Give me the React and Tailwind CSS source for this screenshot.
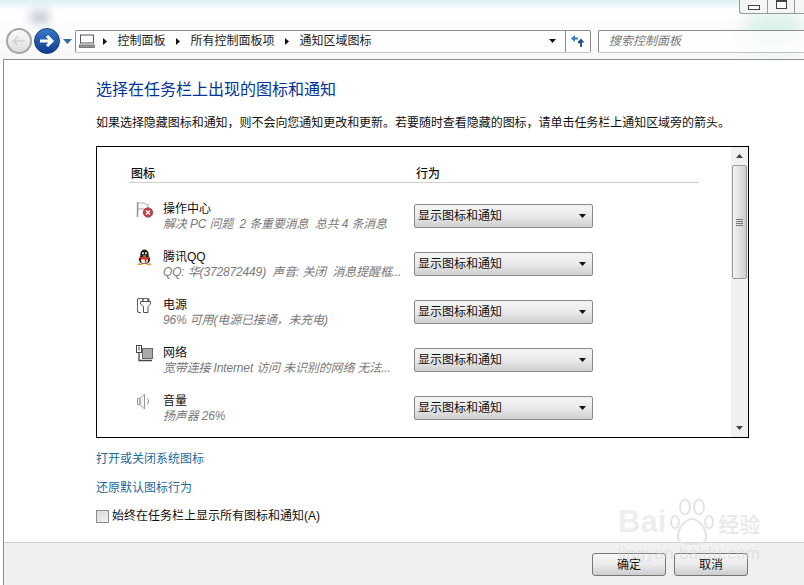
const rows = [
  { icon: 'flag', title: '操作中心', sub: '解决 PC 问题  2 条重要消息  总共 4 条消息' },
  { icon: 'qq', title: '腾讯QQ', sub: 'QQ: 华(372872449)  声音: 关闭  消息提醒框...' },
  { icon: 'power', title: '电源', sub: '96% 可用(电源已接通，未充电)' },
  { icon: 'network', title: '网络', sub: '宽带连接 Internet 访问 未识别的网络 无法...' },
  { icon: 'volume', title: '音量', sub: '扬声器 26%' },
]

function RowIcon({ name }) {
  if (name === 'flag') {
    return (
      <svg width="17" height="17" viewBox="0 0 17 17" fill="none">
        <path d="M1.5 1v15" stroke="#8f8f8f" strokeWidth="1.4" />
        <path d="M2 1.5c2 1 3 0 5 .5s3 2 5 1.5V8H2z" fill="#fafafa" stroke="#a8a8a8" />
        <path d="M2 11V8" stroke="#a8a8a8" />
        <circle cx="12" cy="11.5" r="4.6" fill="#d23a42" stroke="#9c3b40" />
        <path d="M10 9.5l4 4M14 9.5l-4 4" stroke="#fff" strokeWidth="1.4" />
      </svg>
    )
  }
  if (name === 'qq') {
    return (
      <svg width="17" height="17" viewBox="0 0 17 17">
        <ellipse cx="8.5" cy="5.5" rx="4.2" ry="5" fill="#1c1c1c" />
        <ellipse cx="8.5" cy="10.5" rx="5.6" ry="4.6" fill="#1c1c1c" />
        <ellipse cx="8.5" cy="11" rx="3.6" ry="3.6" fill="#f3eee2" />
        <path d="M4 8h9l-.6 2.2-2 .3.2 3H8.8V10.5H4.6z" fill="#d5361b" />
        <path d="M1.5 15.5c1-1.6 3-1.6 5-.4v.9h-5zM15.5 15.5c-1-1.6-3-1.6-5-.4v.9h5z" fill="#f0a01e" />
        <circle cx="7" cy="4.3" r="1" fill="#fff" />
        <circle cx="10" cy="4.3" r="1" fill="#fff" />
        <path d="M6.5 6.2h4L8.5 7.6z" fill="#f0a01e" />
      </svg>
    )
  }
  if (name === 'power') {
    return (
      <svg width="17" height="17" viewBox="0 0 17 17" fill="none">
        <path d="M5 15.5H2.5l-1-1V2.5l1-1h9.5l1 1v1.5" stroke="#666" strokeWidth="1.1" />
        <path d="M4.5 4.5h10v2.5l-2.5 2.5v6H7.5v-6L4.5 7z" fill="#fff" stroke="#555" />
        <path d="M7 1.5v3M12 1.5v3" stroke="#555" strokeWidth="1.4" />
      </svg>
    )
  }
  if (name === 'network') {
    return (
      <svg width="17" height="17" viewBox="0 0 17 17" fill="none">
        <rect x="6.5" y="3.5" width="10" height="10" fill="#a9a9a9" stroke="#666" />
        <path d="M3 8v7.5h13" stroke="#444" strokeWidth="1.3" />
        <rect x="0.5" y="0.5" width="5" height="7" fill="#fff" stroke="#444" />
        <path d="M3 1.5v4" stroke="#444" />
      </svg>
    )
  }
  return (
    <svg width="17" height="17" viewBox="0 0 17 17" fill="none">
      <path d="M1.5 5.5H4v6H1.5zM4 5.5L8.5 1v15L4 11.5z" fill="#f6f6f6" stroke="#9a9a9a" />
      <path d="M11.5 5.5c1.2 2 1.2 4 0 6" stroke="#8a8a8a" />
    </svg>
  )
}

function Caret({ className }) {
  return (
    <svg className={className} width="7" height="4" viewBox="0 0 7 4">
      <path d="M0 0h7L3.5 4z" fill="#111" />
    </svg>
  )
}

function Select() {
  return (
    <div className="flex h-[24px] w-[179px] items-center justify-between rounded-[2px] border border-[#8a8a8a] bg-gradient-to-b from-[#f4f4f4] via-[#e9e9e9] to-[#cfcfcf] pl-[3px] pr-[6px] text-[12px] text-[#111]">
      <span>显示图标和通知</span>
      <Caret />
    </div>
  )
}

function WinButton({ children }) {
  return (
    <button className="h-[23px] w-[74px] rounded-[3px] border border-[#777] bg-gradient-to-b from-[#f6f6f6] via-[#ebebeb] to-[#cdcdcd] text-[12px] text-[#111]">
      {children}
    </button>
  )
}

function Crumb({ children }) {
  return (
    <>
      <svg width="4" height="7" viewBox="0 0 4 7" className="mx-[10.5px]">
        <path d="M0 0l4 3.5L0 7z" fill="#111" />
      </svg>
      <span>{children}</span>
    </>
  )
}

export default function App() {
  return (
    <div className="relative flex h-[585px] w-[804px] flex-col overflow-hidden bg-white font-['Liberation_Sans','Noto_Sans_CJK_SC',sans-serif]">
      {/* aero glass */}
      <div className="relative h-[59px] shrink-0 overflow-hidden bg-gradient-to-b from-[#dcf0f4] via-white via-[18%] to-[#f6f8f7]">
        <div className="absolute left-[30px] top-[10px] h-[14px] w-[20px] rounded-full bg-[#c4ccd6] blur-[5px]" />
        <div className="absolute right-[0px] top-[12px] h-[36px] w-[60px] rounded-full bg-[#d8efe9] blur-[10px]" />
        <div className="absolute right-0 top-0 flex h-[14px] w-[65px] overflow-hidden rounded-bl-[3px] border-b border-l border-[#999] bg-[#f4f6f6]">
          <div className="flex w-[28px] items-center justify-center border-r border-[#999]">
            <div className="mt-[2px] h-[5px] w-[12px] border border-[#444] bg-white" />
          </div>
          <div className="flex w-[27px] justify-center border-r border-[#999]">
            <div className="h-[9px] w-[11px] border border-t-[2px] border-[#444] bg-white" />
          </div>
        </div>

        <div className="relative flex items-center pl-[6px] pt-[28px]">
          <div className="flex h-[26px] w-[26px] items-center justify-center rounded-full border-2 border-[#a5a5a5] bg-gradient-to-b from-[#fafafa] to-[#dedede]">
            <svg width="14" height="12" viewBox="0 0 14 12" fill="none">
              <path d="M13 6H2M6 1.5L1.5 6 6 10.5" stroke="#d2d2d2" strokeWidth="1.5" />
            </svg>
          </div>
          <div className="ml-[2px] flex h-[26px] w-[26px] items-center justify-center rounded-full border border-[#123c7d] bg-gradient-to-b from-[#3c78c8] to-[#0e3b8c]">
            <svg width="16" height="14" viewBox="0 0 16 14" fill="none">
              <path d="M1 7h12M8 2l5 5-5 5" stroke="#fff" strokeWidth="3" />
            </svg>
          </div>
          <svg width="9" height="5" viewBox="0 0 9 5" className="ml-[3px]">
            <path d="M0 0h9L4.5 5z" fill="#2f6f9f" />
          </svg>
          <div className="ml-[3px] flex h-[23px] w-[516px] items-center rounded-[2px] border border-[#8c8c8c] border-b-[#c4c4c4] bg-white/70 text-[12px] text-[#222]">
            <svg width="16" height="14" viewBox="0 0 16 14" fill="none" className="ml-[3px] mr-[-2.5px]">
              <rect x="1.5" y="1" width="13" height="8" stroke="#555" />
              <rect x="0.5" y="11" width="15" height="2.5" fill="#999" stroke="#555" strokeWidth="0.7" />
            </svg>
            <Crumb>控制面板</Crumb>
            <Crumb>所有控制面板项</Crumb>
            <Crumb>通知区域图标</Crumb>
            <Caret className="ml-auto mr-[9px]" />
            <div className="flex h-full w-[25px] items-center justify-center border-l border-[#8c8c8c]">
              <svg width="15" height="13" viewBox="0 0 15 13" fill="none">
                <path d="M7 3.5H3" stroke="#3a78b4" strokeWidth="2" />
                <path d="M4 0L0 3.5 4 7z" fill="#3a78b4" />
                <path d="M10 12V7c-1 0-2 0-3 .5" stroke="#1d4f80" strokeWidth="1.8" />
                <path d="M6.5 7.5L10 3.5l3.5 4z" fill="#1d4f80" />
              </svg>
            </div>
          </div>
          <div className="ml-[7px] flex h-[23px] flex-1 items-center rounded-l-[2px] border border-r-0 border-[#8c8c8c] border-b-[#c4c4c4] bg-white/70 pl-[10px] text-[12px] italic text-[#777]">
            搜索控制面板
          </div>
        </div>
      </div>

      {/* content */}
      <div className="ml-[3px] flex flex-1 flex-col border-l border-t border-[#8a8f93]">
        <div className="flex flex-1 flex-col pl-[92px] pr-[55px]">
          <h1 className="mt-[19px] text-[16px] font-normal leading-[21px] text-[#003399]">选择在任务栏上出现的图标和通知</h1>
          <p className="mt-[14px] whitespace-nowrap text-[12px] leading-[18px] tracking-[-0.04px] text-[#111]">
            如果选择隐藏图标和通知，则不会向您通知更改和更新。若要随时查看隐藏的图标，请单击任务栏上通知区域旁的箭头。
          </p>

          <div className="mt-[14px] flex h-[292px] border-[1.5px] border-black">
            <div className="flex-1 pl-[32px] pr-[32px] pt-[17px]">
              <div className="flex h-[19px] items-start border-b border-[#cfcfcf] pt-[1px] text-[12px] font-medium leading-[18px] text-[#111]">
                <span className="w-[287px] pl-[2px]">图标</span>
                <span>行为</span>
              </div>
              <div className="pt-[9px]">
                {rows.map((row) => (
                  <div key={row.title} className="flex h-[48px] items-center">
                    <div className="-mt-[14px] flex w-[34px] justify-start pl-[7px]">
                      <RowIcon name={row.icon} />
                    </div>
                    <div className="w-[251px] whitespace-pre">
                      <div className="text-[12px] leading-[16px] text-[#111]">{row.title}</div>
                      <div className="text-[12px] italic leading-[14px] tracking-[-0.15px] text-[#7a7a7a]">{row.sub}</div>
                    </div>
                    <Select />
                  </div>
                ))}
              </div>
            </div>
            {/* scrollbar */}
            <div className="flex w-[17px] flex-col items-center bg-[#f0f0f0]">
              <svg width="7" height="4" viewBox="0 0 7 4" className="mt-[7px]">
                <path d="M0 4h7L3.5 0z" fill="#444" />
              </svg>
              <div className="mt-[7px] flex h-[114px] w-[15px] flex-col items-center justify-center gap-[1px] rounded-[2px] border border-[#999] bg-gradient-to-r from-[#f4f4f4] to-[#cfcfcf]">
                <div className="h-px w-[7px] bg-[#777]" />
                <div className="h-px w-[7px] bg-[#777]" />
                <div className="h-px w-[7px] bg-[#777]" />
                <div className="h-px w-[7px] bg-[#777]" />
              </div>
              <svg width="7" height="4" viewBox="0 0 7 4" className="mb-[7px] mt-auto">
                <path d="M0 0h7L3.5 4z" fill="#444" />
              </svg>
            </div>
          </div>

          <a className="mt-[12px] text-[12px] leading-[18px] text-[#1c6a9e]">打开或关闭系统图标</a>
          <a className="mt-[11px] text-[12px] leading-[18px] text-[#1c6a9e]">还原默认图标行为</a>
          <label className="mt-[10px] flex items-center text-[12px] leading-[18px] text-[#111]">
            <span className="mr-[3px] h-[13px] w-[13px] border border-[#8a8a8a] bg-gradient-to-br from-[#d8d8d8] to-[#f2f2f2]" />
            始终在任务栏上显示所有图标和通知(A)
          </label>
        </div>

        <div className="flex h-[43px] shrink-0 items-start justify-end gap-[8px] border-t border-[#cfcfcf] bg-[#f0f0f0] pr-[56px] pt-[10px]">
          <WinButton>确定</WinButton>
          <WinButton>取消</WinButton>
        </div>
      </div>

      {/* baidu watermark */}
      <div className="pointer-events-none absolute left-[618px] top-[498px] flex flex-col">
        <div className="flex items-end">
          <span className="text-[31px] font-bold leading-[48px] text-[#e8e8e8]/75">Bai</span>
          <svg width="46" height="48" viewBox="0 0 46 48" className="ml-[3px]" fill="none" stroke="#e4e4e4" strokeWidth="2">
            <ellipse cx="6" cy="24" rx="4" ry="6" />
            <ellipse cx="16" cy="9" rx="5" ry="7.5" />
            <ellipse cx="30" cy="9" rx="5" ry="7.5" />
            <ellipse cx="40" cy="24" rx="4" ry="6" />
            <path d="M9 39c0-10 8-18 14-18s14 8 14 18c0 6-6 7-14 7s-14-1-14-7z" />
          </svg>
          <span className="ml-[3px] text-[21px] font-bold leading-[42px] text-[#e4e4e4]/75">经验</span>
        </div>
        <div className="-mt-[2px] text-[17px] leading-[20px] tracking-[0.3px] text-[#d4d4d4]/55">jingyan.baidu.com</div>
      </div>
    </div>
  )
}
